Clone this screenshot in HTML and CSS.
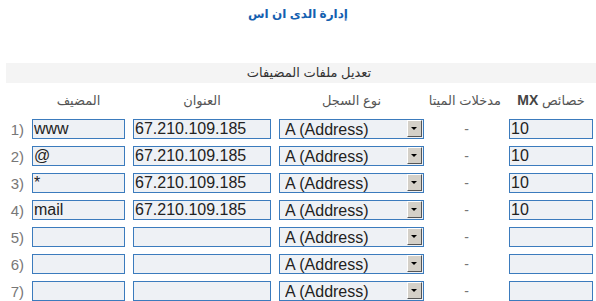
FILE: index.html
```html
<!DOCTYPE html>
<html lang="ar">
<head>
    <meta charset="UTF-8">
    <title>إدارة الدى ان اس</title>
    <link rel="stylesheet" href="styles.css">
</head>
<body>
    <div class="title">إدارة الدى ان اس</div>
    <div class="bar">تعديل ملفات المضيفات</div>
    <div class="hosts">
        <div class="head">خصائص <b>MX</b></div>
        <div class="head">مدخلات الميتا</div>
        <div class="head">نوع السجل</div>
        <div class="head">العنوان</div>
        <div class="head">المضيف</div>
        <div class="head"></div>

        <input class="field" value="10">
        <div class="meta">-</div>
        <div class="select-wrap"><select class="field"><option>A (Address)</option></select><span class="arrow"></span></div>
        <input class="field" value="67.210.109.185">
        <input class="field" value="www">
        <div class="num">1)</div>

        <input class="field" value="10">
        <div class="meta">-</div>
        <div class="select-wrap"><select class="field"><option>A (Address)</option></select><span class="arrow"></span></div>
        <input class="field" value="67.210.109.185">
        <input class="field" value="@">
        <div class="num">2)</div>

        <input class="field" value="10">
        <div class="meta">-</div>
        <div class="select-wrap"><select class="field"><option>A (Address)</option></select><span class="arrow"></span></div>
        <input class="field" value="67.210.109.185">
        <input class="field" value="*">
        <div class="num">3)</div>

        <input class="field" value="10">
        <div class="meta">-</div>
        <div class="select-wrap"><select class="field"><option>A (Address)</option></select><span class="arrow"></span></div>
        <input class="field" value="67.210.109.185">
        <input class="field" value="mail">
        <div class="num">4)</div>

        <input class="field" value="">
        <div class="meta">-</div>
        <div class="select-wrap"><select class="field"><option>A (Address)</option></select><span class="arrow"></span></div>
        <input class="field" value="">
        <input class="field" value="">
        <div class="num">5)</div>

        <input class="field" value="">
        <div class="meta">-</div>
        <div class="select-wrap"><select class="field"><option>A (Address)</option></select><span class="arrow"></span></div>
        <input class="field" value="">
        <input class="field" value="">
        <div class="num">6)</div>

        <input class="field" value="">
        <div class="meta">-</div>
        <div class="select-wrap"><select class="field"><option>A (Address)</option></select><span class="arrow"></span></div>
        <input class="field" value="">
        <input class="field" value="">
        <div class="num">7)</div>
    </div>
</body>
</html>
```

FILE: styles.css
```css
body { margin: 0; background: #fff; font-family: "Liberation Sans", "DejaVu Sans", sans-serif; color: #333; }
.title { margin-top: 6px; line-height: 16px; text-align: center; font-size: 12px; font-weight: bold; color: #1560b0; direction: rtl; }
.bar { margin: 41px 0 0 6px; padding-left: 16px; height: 20px; line-height: 20px; background: #f4f4f4; text-align: center; font-size: 13px; color: #333; direction: rtl; }
.hosts { margin: 9px 0 0 6px; width: 587px; display: grid; direction: rtl; grid-template-columns: 84px 69px 145px 138px 93px 18px; column-gap: 8px; row-gap: 7px; align-items: center; }
.head { line-height: 16px; padding-bottom: 3px; text-align: center; font-size: 13px; color: #555; white-space: nowrap; }
.head b { font-family: "Liberation Sans", sans-serif; font-size: 14px; color: #444; }
.field { box-sizing: border-box; width: 100%; height: 20px; margin: 0; padding: 0 1px; border: 1px solid #3b7bbd; border-radius: 0; background: #eef1f5; font-family: "Liberation Sans", sans-serif; font-size: 16px; color: #222; direction: ltr; outline: none; }
select.field { appearance: none; -webkit-appearance: none; padding-left: 5px; }
.select-wrap { position: relative; }
.arrow { position: absolute; right: 2px; top: 1px; width: 15px; height: 17px; background: #d4d0c8; border-top: 1px solid #fff; border-left: 1px solid #fff; border-right: 1px solid #555; border-bottom: 1px solid #555; box-sizing: border-box; pointer-events: none; }
.arrow::after { content: ""; position: absolute; left: 3px; top: 6px; border-left: 3px solid transparent; border-right: 3px solid transparent; border-top: 3px solid #000; }
.meta { text-align: center; font-size: 14px; color: #777; }
.num { direction: ltr; text-align: right; font-size: 15px; color: #777; }
```
